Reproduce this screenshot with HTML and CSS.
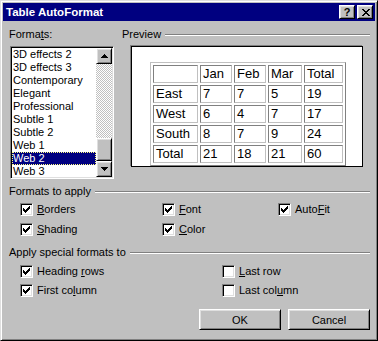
FILE: index.html
```html
<!DOCTYPE html>
<html lang="en">
<head>
    <meta charset="UTF-8">
    <title>Table AutoFormat</title>
    <link rel="stylesheet" href="styles.css">
</head>
<body>
<div class="dialog">
    <div class="titlebar">
        <span class="title">Table AutoFormat</span>
        <span class="caption-btn help">?</span>
        <span class="caption-btn close">
            <svg width="8" height="7" viewBox="0 0 8 7" shape-rendering="crispEdges">
                <rect x="0" y="0" width="2" height="1"/><rect x="6" y="0" width="2" height="1"/>
                <rect x="1" y="1" width="2" height="1"/><rect x="5" y="1" width="2" height="1"/>
                <rect x="2" y="2" width="4" height="1"/>
                <rect x="3" y="3" width="2" height="1"/>
                <rect x="2" y="4" width="4" height="1"/>
                <rect x="1" y="5" width="2" height="1"/><rect x="5" y="5" width="2" height="1"/>
                <rect x="0" y="6" width="2" height="1"/><rect x="6" y="6" width="2" height="1"/>
            </svg>
        </span>
    </div>

    <div class="content">
        <div class="top">
            <div class="formats">
                <div class="label">Forma<u>t</u>s:</div>
                <div class="listbox">
                    <ul class="items">
                        <li>3D effects 2</li>
                        <li>3D effects 3</li>
                        <li>Contemporary</li>
                        <li>Elegant</li>
                        <li>Professional</li>
                        <li>Subtle 1</li>
                        <li>Subtle 2</li>
                        <li>Web 1</li>
                        <li class="selected">Web 2</li>
                        <li>Web 3</li>
                    </ul>
                    <div class="scrollbar">
                        <div class="sb-btn">
                            <svg width="7" height="4" viewBox="0 0 7 4" shape-rendering="crispEdges">
                                <rect x="3" y="0" width="1" height="1"/><rect x="2" y="1" width="3" height="1"/>
                                <rect x="1" y="2" width="5" height="1"/><rect x="0" y="3" width="7" height="1"/>
                            </svg>
                        </div>
                        <div class="sb-track"></div>
                        <div class="sb-thumb"></div>
                        <div class="sb-btn">
                            <svg width="7" height="4" viewBox="0 0 7 4" shape-rendering="crispEdges">
                                <rect x="0" y="0" width="7" height="1"/><rect x="1" y="1" width="5" height="1"/>
                                <rect x="2" y="2" width="3" height="1"/><rect x="3" y="3" width="1" height="1"/>
                            </svg>
                        </div>
                    </div>
                </div>
            </div>

            <div class="preview">
                <div class="group-title">Preview</div>
                <div class="preview-box">
                    <table class="sample">
                        <tr><td class="c0"></td><td class="c1">Jan</td><td class="c2">Feb</td><td class="c3">Mar</td><td class="c4">Total</td></tr>
                        <tr><td>East</td><td>7</td><td>7</td><td>5</td><td>19</td></tr>
                        <tr><td>West</td><td>6</td><td>4</td><td>7</td><td>17</td></tr>
                        <tr><td>South</td><td>8</td><td>7</td><td>9</td><td>24</td></tr>
                        <tr><td>Total</td><td>21</td><td>18</td><td>21</td><td>60</td></tr>
                    </table>
                </div>
            </div>
        </div>

        <div class="group-title apply-title">Formats to apply</div>
        <div class="checks apply">
            <label class="check"><span class="box checked"></span><span><u>B</u>orders</span></label>
            <label class="check"><span class="box checked"></span><span><u>F</u>ont</span></label>
            <label class="check"><span class="box checked"></span><span>Auto<u>F</u>it</span></label>
            <label class="check"><span class="box checked"></span><span><u>S</u>hading</span></label>
            <label class="check"><span class="box checked"></span><span><u>C</u>olor</span></label>
        </div>

        <div class="group-title special-title">Apply special formats to</div>
        <div class="checks special">
            <label class="check"><span class="box checked"></span><span>Heading <u>r</u>ows</span></label>
            <label class="check"><span class="box"></span><span><u>L</u>ast row</span></label>
            <label class="check"><span class="box checked"></span><span>First co<u>l</u>umn</span></label>
            <label class="check"><span class="box"></span><span>Last col<u>u</u>mn</span></label>
        </div>

        <div class="buttons">
            <button class="btn">OK</button>
            <button class="btn">Cancel</button>
        </div>
    </div>
</div>
</body>
</html>
```

FILE: styles.css
```css
body {
    margin: 0;
    background: #c0c0c0;
    font-family: 'Liberation Sans', Arial, sans-serif;
    font-size: 11px;
    color: #000;
}
.dialog {
    width: 378px;
    height: 341px;
    box-sizing: border-box;
    background: #c0c0c0;
    border: 1px solid;
    border-color: #dfdfdf #000 #000 #dfdfdf;
    box-shadow: inset 1px 1px #fff, inset -1px -1px #808080;
    padding: 2px;
}

/* title bar */
.titlebar {
    height: 18px;
    background: #000080;
    display: flex;
    align-items: center;
    padding-left: 3px;
}
.title {
    flex: 1;
    color: #fff;
    font-weight: bold;
    font-size: 11.5px;
    line-height: 18px;
}
.caption-btn {
    width: 16px;
    height: 14px;
    box-sizing: border-box;
    margin-right: 2px;
    display: flex;
    align-items: center;
    justify-content: center;
    font-weight: bold;
    font-size: 11px;
    line-height: 12px;
}
.caption-btn,
.sb-btn,
.sb-thumb,
.btn {
    background: #c0c0c0;
    border: 1px solid;
    border-color: #fff #000 #000 #fff;
    box-shadow: inset 1px 1px #dfdfdf, inset -1px -1px #808080;
}
.close svg {
    margin-left: 1px;
}

/* body */
.content {
    padding: 7px 5px 0 6px;
}
.top {
    display: flex;
    gap: 8px;
}
.formats {
    width: 105px;
}
.label {
    line-height: 13px;
}
.listbox,
.box {
    border: 1px solid;
    border-color: #808080 #fff #fff #808080;
    box-shadow: inset 1px 1px #000, inset -1px -1px #dfdfdf;
}
.listbox {
    margin: 5px 0 0 1px;
    width: 104px;
    height: 133px;
    box-sizing: border-box;
    padding: 1px;
    display: flex;
    background: #fff;
    overflow: hidden;
}
.items {
    width: 84px;
    margin: 0;
    padding: 0;
    list-style: none;
}
.items li {
    line-height: 13px;
    padding-left: 1px;
    white-space: nowrap;
}
.items .selected {
    background: #000080;
    color: #fff;
    outline: 1px dotted #ffff80;
    outline-offset: -1px;
}
.scrollbar {
    width: 16px;
    display: flex;
    flex-direction: column;
}
.sb-btn {
    height: 16px;
    box-sizing: border-box;
    display: flex;
    align-items: center;
    justify-content: center;
}
.sb-track {
    flex: 1;
    background: repeating-conic-gradient(#fff 0 25%, #c0c0c0 0 50%) 0 0 / 2px 2px;
}
.sb-thumb {
    height: 23px;
    box-sizing: border-box;
}

.preview {
    flex: 1;
}
.group-title {
    display: flex;
    align-items: center;
    line-height: 13px;
}
.group-title::after {
    content: "";
    flex: 1;
    margin: 1px 0 0 4px;
    border-top: 1px solid #808080;
    border-bottom: 1px solid #fff;
}
.preview-box {
    margin: 5px 7px 0 9px;
    height: 121px;
    box-sizing: border-box;
    background: #fff;
    border: 1px solid #000;
    box-shadow: -1px -1px 0 #808080;
    overflow: hidden;
}
.sample {
    margin: 15px 0 0 18px;
    border-collapse: separate;
    border-spacing: 2px;
    border: 1px solid;
    border-color: #c0c0c0 #808080 #808080 #c0c0c0;
    font-size: 13px;
}
.sample td {
    box-sizing: border-box;
    height: 18px;
    padding: 0 2px;
    line-height: 16px;
    border: 1px solid;
    border-color: #808080 #c0c0c0 #c0c0c0 #808080;
    white-space: nowrap;
}
.sample .c0 { width: 45px; }
.sample .c1 { width: 32px; }
.sample .c2 { width: 32px; }
.sample .c3 { width: 34px; }
.sample .c4 { width: 39px; }

/* check boxes */
.apply-title {
    margin-top: 6px;
}
.special-title {
    margin-top: 7px;
}
.checks {
    display: grid;
    padding-left: 11px;
}
.apply {
    margin-top: 1px;
    grid-template-columns: 142px 116px auto;
    grid-auto-rows: 20px;
}
.apply .check:nth-child(4) {
    grid-column: 1;
}
.special {
    margin-top: 3px;
    grid-template-columns: 202px auto;
    grid-auto-rows: 19px;
}
.check {
    display: flex;
    align-items: center;
    line-height: 13px;
}
.box {
    width: 13px;
    height: 13px;
    box-sizing: border-box;
    background: #fff;
    margin-right: 4px;
}
.box.checked {
    background: #fff url("data:image/svg+xml,%3Csvg xmlns='http://www.w3.org/2000/svg' width='7' height='7' shape-rendering='crispEdges'%3E%3Cpath d='M6 0h1v3h-1zM5 1h1v3h-1zM4 2h1v3h-1zM3 3h1v3h-1zM2 4h1v3h-1zM1 3h1v3h-1zM0 2h1v3h-1z'/%3E%3C/svg%3E") no-repeat 2px 2px;
}

/* buttons */
.buttons {
    margin-top: 9px;
    display: flex;
    justify-content: flex-end;
    gap: 7px;
}
.btn {
    width: 82px;
    height: 21px;
    box-sizing: border-box;
    padding: 0;
    font: 11px 'Liberation Sans', Arial, sans-serif;
    color: #000;
}
```
